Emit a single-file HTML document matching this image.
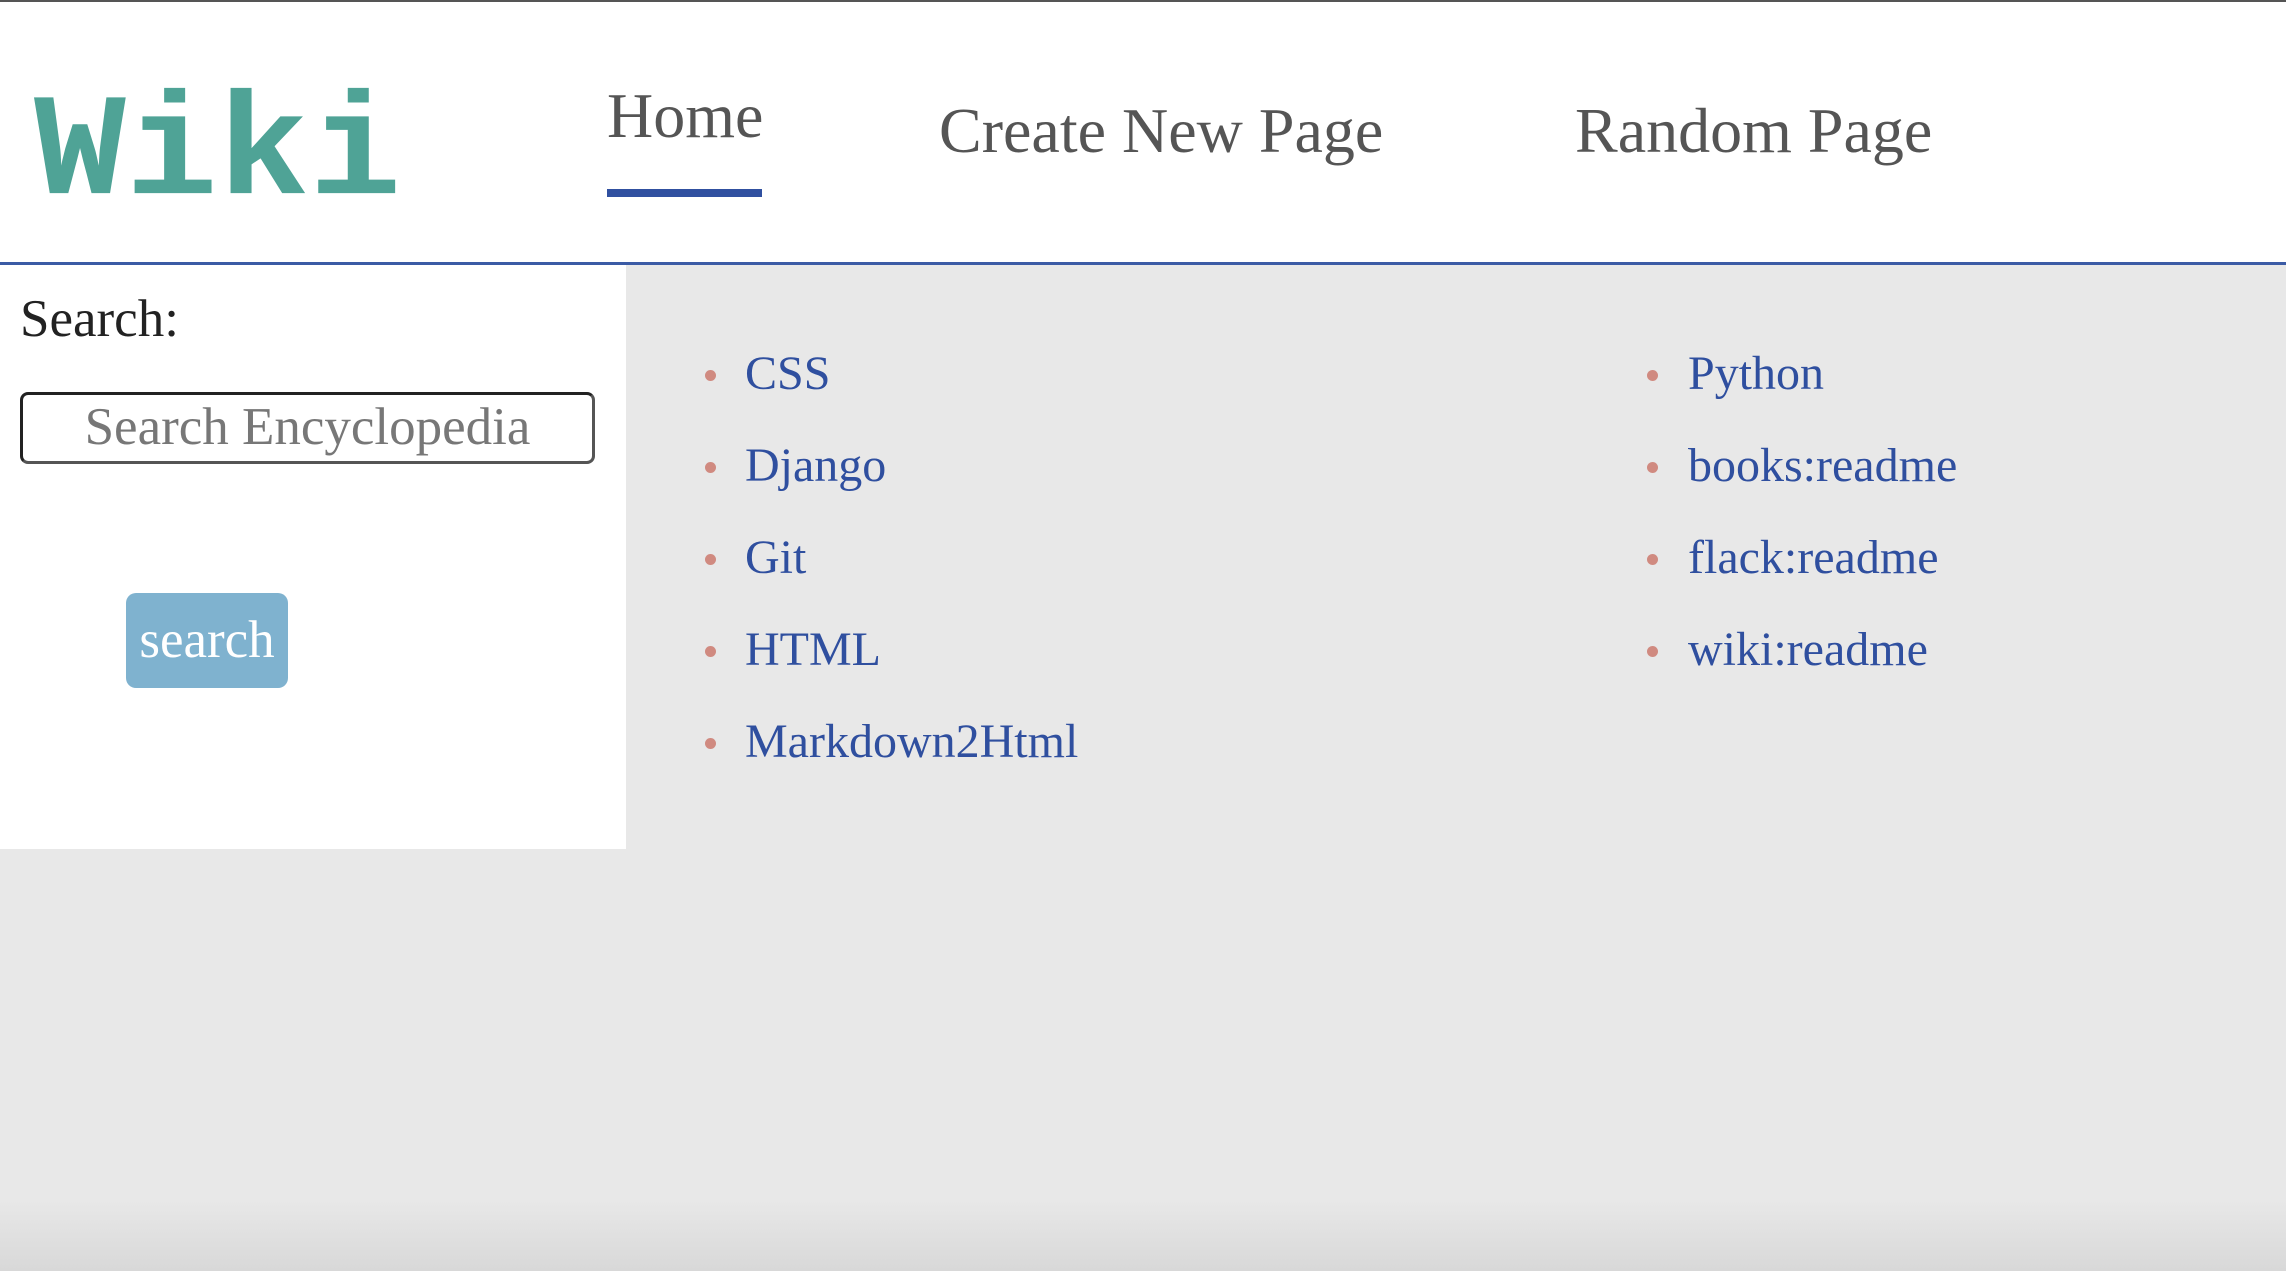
<!DOCTYPE html>
<html><head><meta charset="utf-8"><style>
html,body{margin:0;padding:0;width:2286px;height:1271px;overflow:hidden;background:#e8e8e8;font-family:"Liberation Serif",serif;position:relative}
.hdr{position:absolute;left:0;top:0;width:2286px;height:265px;background:#fff;border-top:2px solid #555;border-bottom:3px solid #3b5ba5;box-sizing:border-box}
.logo{position:absolute;left:34px;top:80px;font-family:"Liberation Mono",monospace;font-weight:bold;font-size:153px;color:#4fa396;line-height:1;letter-spacing:0;transform:scaleY(0.95);transform-origin:top left}
.nav{position:absolute;font-size:64px;color:#555;line-height:1;white-space:nowrap}
.ul{position:absolute;left:607px;top:187px;width:155px;height:8px;background:#3050a0}
.side{position:absolute;left:0;top:265px;width:626px;height:584px;background:#fff}
.lbl{position:absolute;left:20px;top:293px;font-size:53px;color:#222;line-height:1}
.inp{position:absolute;left:20px;top:392px;width:575px;height:72px;box-sizing:border-box;border:3px solid #555;border-top-color:#222;border-left-color:#222;border-radius:8px;font-size:53px;color:#777;text-align:center;line-height:64px}
.btn{position:absolute;left:126px;top:593px;width:162px;height:95px;background:#7fb2cf;border-radius:10px;color:#fff;font-size:53px;text-align:center;line-height:95px}
.li{position:absolute;font-size:48px;color:#2f4f9f;line-height:1;white-space:nowrap}
.dot{position:absolute;width:11px;height:11px;border-radius:50%;background:#d08a80}
.shadow{position:absolute;left:0;top:1200px;width:2286px;height:71px;background:linear-gradient(#e8e8e800,#d8d8d8)}
</style></head><body>
<div class="hdr">
<div class="logo">Wiki</div>
<div class="nav" style="left:607px;top:82px">Home</div>
<div class="nav" style="left:939px;top:97px">Create New Page</div>
<div class="nav" style="left:1575px;top:97px">Random Page</div>
<div class="ul"></div>
</div>
<div class="side"></div>
<div class="lbl">Search:</div>
<div class="inp">Search Encyclopedia</div>
<div class="btn">search</div>

<div class="dot" style="left:705px;top:370px"></div><div class="li" style="left:745px;top:350px">CSS</div>
<div class="dot" style="left:705px;top:462px"></div><div class="li" style="left:745px;top:442px">Django</div>
<div class="dot" style="left:705px;top:554px"></div><div class="li" style="left:745px;top:534px">Git</div>
<div class="dot" style="left:705px;top:646px"></div><div class="li" style="left:745px;top:626px">HTML</div>
<div class="dot" style="left:705px;top:738px"></div><div class="li" style="left:745px;top:718px">Markdown2Html</div>

<div class="dot" style="left:1647px;top:370px"></div><div class="li" style="left:1688px;top:350px">Python</div>
<div class="dot" style="left:1647px;top:462px"></div><div class="li" style="left:1688px;top:442px">books:readme</div>
<div class="dot" style="left:1647px;top:554px"></div><div class="li" style="left:1688px;top:534px">flack:readme</div>
<div class="dot" style="left:1647px;top:646px"></div><div class="li" style="left:1688px;top:626px">wiki:readme</div>
<div class="shadow"></div>
</body></html>
